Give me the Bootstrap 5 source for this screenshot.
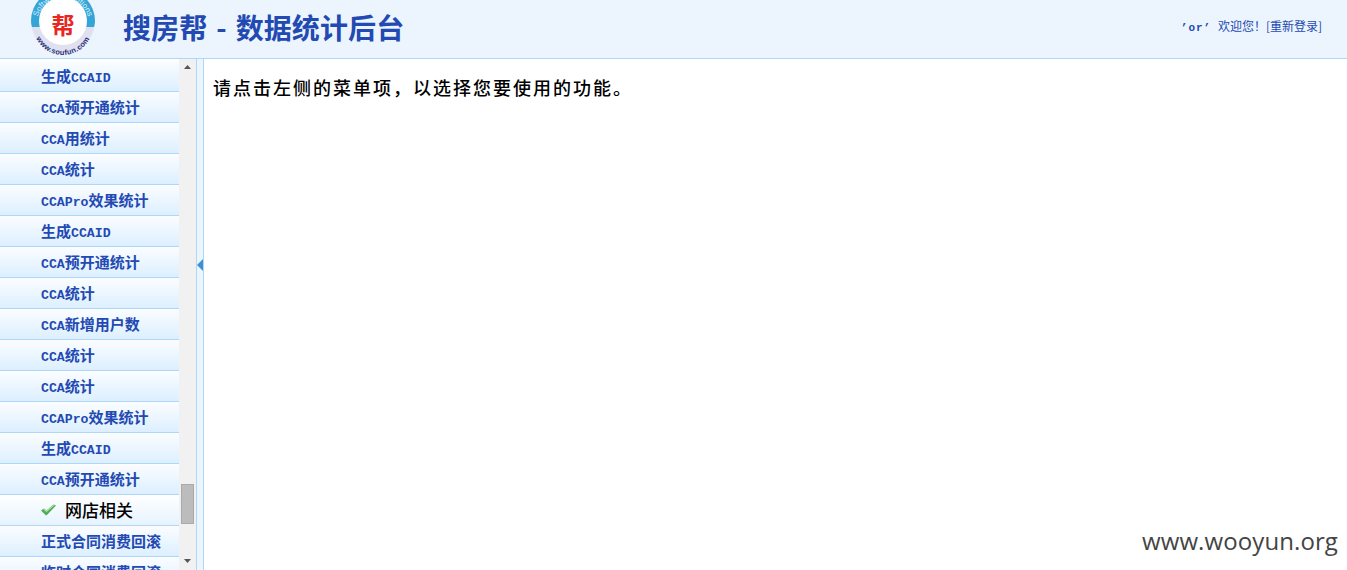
<!DOCTYPE html>
<html lang="zh">
<head>
<meta charset="utf-8">
<title>搜房帮 - 数据统计后台</title>
<link rel="stylesheet" href="https://cdn.jsdelivr.net/npm/bootstrap@5.3.0/dist/css/bootstrap.min.css">
<style>
html,body{height:100%;overflow:hidden;background:#fff;font-family:"Noto Sans CJK SC","Liberation Sans",sans-serif}
.app-shell{height:570px;overflow:hidden}
.top-bar{height:59px;background:#ecf5fd;border-bottom:1px solid #aed8f5;color:#2349b2;flex:none}
.logo-box{width:123px;flex:none;padding-left:28px;height:58px}
.site-title{font-size:28px;font-weight:700;line-height:55px;height:58px;margin:0;color:#2349b2;word-spacing:2.5px;letter-spacing:.1px}
.user-info{font-size:12px;padding-right:25px;line-height:52px;height:58px}
.user-info b{font-family:"Liberation Mono",monospace;font-size:11px;letter-spacing:1px;margin-right:4px}
.side-menu{width:179px;flex:none;overflow:hidden;padding-top:2px}
.menu-row{height:31px;line-height:30px;padding-left:41px;font-size:15px;font-weight:700;color:#2349b2;white-space:nowrap;border-bottom:1px solid #aed8f5;background:linear-gradient(#fbfdff,#dcefff)}
.menu-row b{font-family:"Liberation Mono",monospace;font-size:13.2px}
.menu-head{color:#000;font-size:17px;font-weight:500;padding-left:41px;gap:9px;display:flex;align-items:center;background:linear-gradient(#fff,#e6f3fe)}
.scroll-track{width:17px;flex:none;background:#f1f1f1}
.scroll-arrow{height:17px;flex:none}
.scroll-thumb{width:13px;height:40px;background:#bcbcbc;border:1px solid #aaa;margin-bottom:29px}
.split-bar{width:8px;flex:none;background:#ecf5fd;border-left:1px solid #aed8f5;border-right:1px solid #aed8f5;padding-top:200px}
.page-msg{font-size:18px;font-weight:500;letter-spacing:2px;color:#000;padding:14px 0 0 9px;line-height:28px;margin:0}
.water-mark{position:absolute;right:9px;bottom:13px;font-family:"Open Sans",sans-serif;font-size:24px;line-height:32px;color:#444;letter-spacing:.1px}
</style>
</head>
<body>
<div class="app-shell d-flex flex-column position-relative">
  <header class="top-bar d-flex align-items-start">
    <div class="logo-box">
      <svg width="70" height="58" viewBox="0 0 70 58" class="d-block">
        <defs>
          <path id="arcTop" d="M9 24 A26 26 0 0 1 61 24"/>
          <path id="arcBot" d="M5 25 A30 30 0 0 0 65 25"/>
        </defs>
        <circle cx="35" cy="21" r="32" fill="#dfe0f0"/>
        <path d="M3 21 A32 32 0 0 1 67 21 Q67 24 66 27 H4 Q3 24 3 21 Z" fill="#35a5d8"/>
        <circle cx="35" cy="21" r="24" fill="#fff"/>
        <text x="35" y="34" text-anchor="middle" font-size="23" font-weight="700" fill="#e8271f" font-family="Noto Sans CJK SC">帮</text>
        <text font-size="8" fill="#d8f0fb" font-family="Liberation Sans"><textPath href="#arcTop" startOffset="50%" text-anchor="middle">Software Solutions</textPath></text>
        <text font-size="7.5" font-weight="700" letter-spacing=".3" fill="#2a2f78" font-family="Liberation Sans"><textPath href="#arcBot" startOffset="50%" text-anchor="middle">www.soufun.com</textPath></text>
      </svg>
    </div>
    <h1 class="site-title">搜房帮 - 数据统计后台</h1>
    <div class="user-info ms-auto"><b>’or’</b> 欢迎您！[重新登录]</div>
  </header>
  <div class="d-flex flex-grow-1 overflow-hidden">
    <nav class="side-menu">
      <div class="menu-row">生成<b>CCAID</b></div>
      <div class="menu-row"><b>CCA</b>预开通统计</div>
      <div class="menu-row"><b>CCA</b>用统计</div>
      <div class="menu-row"><b>CCA</b>统计</div>
      <div class="menu-row"><b>CCAPro</b>效果统计</div>
      <div class="menu-row">生成<b>CCAID</b></div>
      <div class="menu-row"><b>CCA</b>预开通统计</div>
      <div class="menu-row"><b>CCA</b>统计</div>
      <div class="menu-row"><b>CCA</b>新增用户数</div>
      <div class="menu-row"><b>CCA</b>统计</div>
      <div class="menu-row"><b>CCA</b>统计</div>
      <div class="menu-row"><b>CCAPro</b>效果统计</div>
      <div class="menu-row">生成<b>CCAID</b></div>
      <div class="menu-row"><b>CCA</b>预开通统计</div>
      <div class="menu-row menu-head">
        <svg width="15" height="12" viewBox="0 0 15 12"><path d="M0 6.5 L3 4.5 L5.5 6.5 L12.5 0.5 L15 1.5 L6.5 10.5 L5 11.5 Z" fill="#4fae55"/><path d="M2.5 5.5 L5.5 8 L13.5 1.2 L12.5 1 L5.5 6.8 L3 5 Z" fill="#c4eab4"/></svg>
        <span>网店相关</span>
      </div>
      <div class="menu-row">正式合同消费回滚</div>
      <div class="menu-row">临时合同消费回滚</div>
    </nav>
    <div class="scroll-track d-flex flex-column align-items-center">
      <svg class="scroll-arrow" width="9" height="17" viewBox="0 0 9 17"><path d="M1 10 L4.5 6 L8 10 Z" fill="#555"/></svg>
      <div class="flex-grow-1"></div>
      <div class="scroll-thumb"></div>
      <svg class="scroll-arrow" width="9" height="17" viewBox="0 0 9 17"><path d="M1 6 L4.5 10 L8 6 Z" fill="#555"/></svg>
    </div>
    <div class="split-bar">
      <svg width="6" height="12" viewBox="0 0 6 12" class="d-block"><path d="M6 0 V12 L0 6 Z" fill="#3f8fd2"/></svg>
    </div>
    <main class="flex-grow-1">
      <p class="page-msg">请点击左侧的菜单项，以选择您要使用的功能。</p>
    </main>
  </div>
  <div class="water-mark">www.wooyun.org</div>
</div>
<script src="https://cdn.jsdelivr.net/npm/bootstrap@5.3.0/dist/js/bootstrap.bundle.min.js"></script>
</body>
</html>
